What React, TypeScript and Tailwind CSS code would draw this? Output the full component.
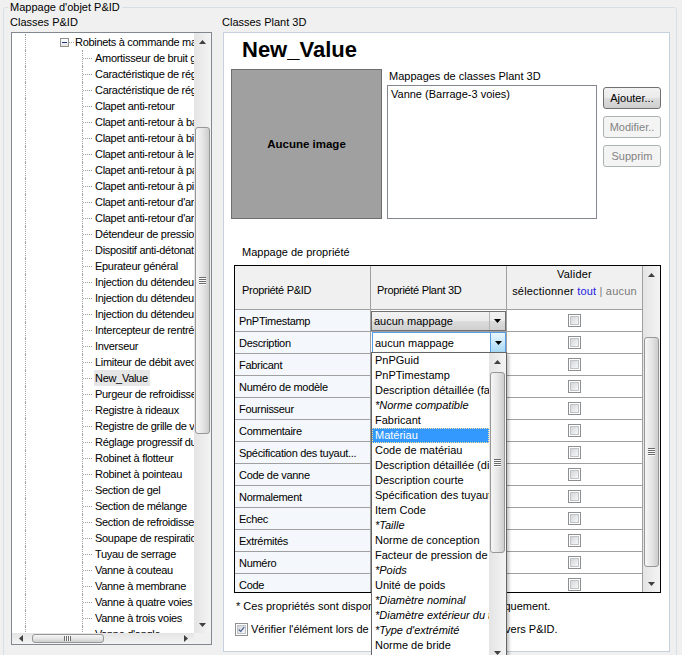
import React from "react";

const treeItems = [
  "Amortisseur de bruit générique",
  "Caractéristique de réglage linéaire",
  "Caractéristique de réglage égal pourcentage",
  "Clapet anti-retour",
  "Clapet anti-retour à battant",
  "Clapet anti-retour à bille",
  "Clapet anti-retour à levée",
  "Clapet anti-retour à papillon",
  "Clapet anti-retour à piston",
  "Clapet anti-retour d'angle",
  "Clapet anti-retour d'arrêt",
  "Détendeur de pression",
  "Dispositif anti-détonation",
  "Epurateur général",
  "Injection du détendeur",
  "Injection du détendeur à vapeur",
  "Injection du détendeur à eau",
  "Intercepteur de rentrée",
  "Inverseur",
  "Limiteur de débit avec clapet",
  "New_Value",
  "Purgeur de refroidissement",
  "Registre à rideaux",
  "Registre de grille de ventilation",
  "Réglage progressif du débit",
  "Robinet à flotteur",
  "Robinet à pointeau",
  "Section de gel",
  "Section de mélange",
  "Section de refroidissement",
  "Soupape de respiration",
  "Tuyau de serrage",
  "Vanne à couteau",
  "Vanne à membrane",
  "Vanne à quatre voies",
  "Vanne à trois voies",
  "Vanne d'angle",
];

const propRows = [
  "PnPTimestamp",
  "Description",
  "Fabricant",
  "Numéro de modèle",
  "Fournisseur",
  "Commentaire",
  "Spécification des tuyaut...",
  "Code de vanne",
  "Normalement",
  "Echec",
  "Extrémités",
  "Numéro",
  "Code",
];

const dropItems = [
  "PnPGuid",
  "PnPTimestamp",
  "Description détaillée (famille)",
  "*Norme compatible",
  "Fabricant",
  "Matériau",
  "Code de matériau",
  "Description détaillée (dimension)",
  "Description courte",
  "Spécification des tuyauteries",
  "Item Code",
  "*Taille",
  "Norme de conception",
  "Facteur de pression de conception",
  "*Poids",
  "Unité de poids",
  "*Diamètre nominal",
  "*Diamètre extérieur du tube",
  "*Type d'extrémité",
  "Norme de bride",
];

function Arrow({ dir, color = "#404040" }: { dir: "up" | "down" | "left" | "right"; color?: string }) {
  if (dir === "up" || dir === "down") {
    return (
      <svg width="7" height="4" viewBox="0 0 7 4">
        <polygon points={dir === "up" ? "3.5,0 7,4 0,4" : "0,0 7,0 3.5,4"} fill={color} />
      </svg>
    );
  }
  return (
    <svg width="4" height="7" viewBox="0 0 4 7">
      <polygon points={dir === "left" ? "0,3.5 4,0 4,7" : "0,0 4,3.5 0,7"} fill={color} />
    </svg>
  );
}

function GripH() {
  return (
    <svg width="7" height="8" viewBox="0 0 7 8">
      <rect x="0" y="0" width="7" height="1" fill="#6a6a6a" />
      <rect x="0" y="2" width="7" height="1" fill="#6a6a6a" />
      <rect x="0" y="4" width="7" height="1" fill="#6a6a6a" />
      <rect x="0" y="6" width="7" height="1" fill="#6a6a6a" />
      <rect x="0" y="1" width="7" height="1" fill="#fbfbfb" />
      <rect x="0" y="3" width="7" height="1" fill="#fbfbfb" />
      <rect x="0" y="5" width="7" height="1" fill="#fbfbfb" />
      <rect x="0" y="7" width="7" height="1" fill="#fbfbfb" />
    </svg>
  );
}

function GripV() {
  return (
    <svg width="8" height="5" viewBox="0 0 8 5">
      <rect x="0" y="0" width="1" height="5" fill="#6a6a6a" />
      <rect x="2" y="0" width="1" height="5" fill="#6a6a6a" />
      <rect x="4" y="0" width="1" height="5" fill="#6a6a6a" />
      <rect x="6" y="0" width="1" height="5" fill="#6a6a6a" />
      <rect x="1" y="0" width="1" height="5" fill="#fbfbfb" />
      <rect x="3" y="0" width="1" height="5" fill="#fbfbfb" />
      <rect x="5" y="0" width="1" height="5" fill="#fbfbfb" />
    </svg>
  );
}

function VScroll({ spacer, thumb }: { spacer: string; thumb: string }) {
  return (
    <div className="flex w-[17px] shrink-0 flex-col bg-gradient-to-r from-[#e4e4e4] to-[#f4f4f4]">
      <div className="flex h-[17px] shrink-0 items-center justify-center">
        <Arrow dir="up" />
      </div>
      <div className="flex min-h-0 flex-1 flex-col px-[1px]">
        <div className={`shrink-0 ${spacer}`} />
        <div
          className={`flex shrink-0 items-center justify-center rounded-[3px] border border-[#979797] bg-gradient-to-r from-[#f6f6f6] via-[#e6e6e6] to-[#cdcdcd] ${thumb}`}
        >
          <GripH />
        </div>
      </div>
      <div className="flex h-[17px] shrink-0 items-center justify-center">
        <Arrow dir="down" />
      </div>
    </div>
  );
}

function CheckBox({ checked = false }: { checked?: boolean }) {
  return (
    <div className="flex h-[13px] w-[13px] items-center justify-center border border-[#8e8f8f] bg-white">
      <div className="flex h-[9px] w-[9px] items-center justify-center border border-[#bfc2c6] bg-gradient-to-br from-[#d4d6d9] to-[#f7f7f7]">
        {checked && (
          <svg width="9" height="9" viewBox="0 0 9 9">
            <path d="M1 4.5 L3.5 7 L8 1.5" stroke="#4a5f97" strokeWidth="1.6" fill="none" />
          </svg>
        )}
      </div>
    </div>
  );
}

function WinButton({ label, disabled = false }: { label: string; disabled?: boolean }) {
  return (
    <button
      disabled={disabled}
      className={
        disabled
          ? "h-[22px] w-[58px] overflow-hidden whitespace-nowrap rounded-[3px] border border-[#adb2b5] bg-[#f4f4f4] text-[#838383]"
          : "h-[22px] w-[58px] overflow-hidden whitespace-nowrap rounded-[3px] border border-[#707070] bg-[linear-gradient(#f2f2f2,#ebebeb_50%,#dddddd_50%,#cfcfcf)] text-black"
      }
    >
      {label}
    </button>
  );
}

function TreeRow({ label, selected }: { label: string; selected?: boolean }) {
  return (
    <div className="flex h-[16px] shrink-0">
      <div className="w-[13px] shrink-0" />
      <div className="w-[57px] shrink-0 border-l border-dotted border-[#a0a0a0]" />
      <div className="flex w-[12px] shrink-0 items-center border-l border-dotted border-[#a0a0a0]">
        <div className="w-[9px] border-t border-dotted border-[#a0a0a0]" />
      </div>
      <span
        className={`whitespace-nowrap pl-[1px] pr-[2px] leading-[16px] ${selected ? "bg-[#e6e6e6]" : ""}`}
      >
        {label}
      </span>
    </div>
  );
}

export default function App() {
  return (
    <div className="relative h-[655px] w-[682px] overflow-hidden bg-[#f0f0f0] font-['Liberation_Sans',Arial,sans-serif] text-[11px] leading-[14px] text-black">
      <fieldset className="ml-[3px] h-[720px] w-[674px] rounded-[3px] border border-[#d5dfe5] p-0">
        <legend className="ml-[4px] px-[2px] leading-[14px]">Mappage d'objet P&amp;ID</legend>

        <div className="flex pl-[6px]">
          {/* Classes P&ID */}
          <div className="w-[202px] shrink-0">
            <div className="mt-[1px]">Classes P&amp;ID</div>
            <div className="ml-[1px] mt-[3px] flex h-[613px] w-[201px] flex-col border border-[#828790] bg-white">
              <div className="flex min-h-0 flex-1">
                <div className="min-w-0 flex-1 overflow-hidden pt-[1px] tracking-[-0.3px]">
                  <div className="flex h-[16px] items-center">
                    <div className="w-[13px] shrink-0" />
                    <div className="h-full w-[35px] shrink-0 border-l border-dotted border-[#a0a0a0]" />
                    <div className="flex h-[9px] w-[9px] shrink-0 items-center justify-center border border-[#919191] bg-gradient-to-b from-white to-[#e4e4e4]">
                      <div className="h-[1px] w-[5px] bg-[#1e3a7a]" />
                    </div>
                    <div className="w-[5px] shrink-0 border-t border-dotted border-[#a0a0a0]" />
                    <span className="whitespace-nowrap pl-[1px]">Robinets à commande manuelle</span>
                  </div>
                  {treeItems.map((t) => (
                    <TreeRow key={t} label={t} selected={t === "New_Value"} />
                  ))}
                </div>
                <VScroll spacer="h-[77px]" thumb="h-[307px]" />
              </div>
              <div className="flex h-[11px] shrink-0">
                <div className="flex min-w-0 flex-1 bg-gradient-to-b from-[#e4e4e4] to-[#f4f4f4]">
                  <div className="flex w-[17px] shrink-0 items-center justify-center">
                    <Arrow dir="left" />
                  </div>
                  <div className="flex flex-1 py-[1px]">
                    <div className="w-[3px] shrink-0" />
                    <div className="flex w-[72px] shrink-0 items-center justify-center rounded-[3px] border border-[#979797] bg-gradient-to-b from-[#f6f6f6] via-[#e6e6e6] to-[#cdcdcd]">
                      <GripV />
                    </div>
                  </div>
                  <div className="flex w-[17px] shrink-0 items-center justify-center">
                    <Arrow dir="right" />
                  </div>
                </div>
                <div className="w-[17px] shrink-0 bg-[#f0f0f0]" />
              </div>
            </div>
          </div>

          {/* Classes Plant 3D */}
          <div className="ml-[10px] w-[448px] shrink-0">
            <div className="mt-[1px]">Classes Plant 3D</div>
            <div className="ml-[1px] mt-[3px] h-[620px] w-[447px] border border-[#c5d1dd] bg-white">
              <h1 className="ml-[18px] mt-[6px] text-[22px] font-bold leading-[22px]">New_Value</h1>

              <div className="ml-[7px] mt-[8px] flex">
                <div className="flex h-[150px] w-[151px] shrink-0 items-center justify-center border border-[#6e6e6e] bg-[#a0a0a0] text-[11.5px] font-bold">
                  Aucune image
                </div>
                <div className="ml-[5px]">
                  <div className="ml-[2px]">Mappages de classes Plant 3D</div>
                  <div className="mt-[2px] h-[134px] w-[210px] border border-[#828790] bg-white pl-[3px] pt-[1px]">
                    Vanne (Barrage-3 voies)
                  </div>
                </div>
                <div className="ml-[6px] mt-[18px] flex flex-col gap-[7px]">
                  <WinButton label="Ajouter..." />
                  <WinButton label="Modifier.." disabled />
                  <WinButton label="Supprim" disabled />
                </div>
              </div>

              <div className="ml-[18px] mt-[26px]">Mappage de propriété</div>

              <div className="ml-[10px] mt-[6px] flex h-[328px] w-[427px] border border-black">
                <div className="w-[408px] shrink-0 overflow-hidden tracking-[-0.3px]">
                  <div className="flex h-[44px] bg-[#f0f0f0]">
                    <div className="w-[136px] border-b border-r border-[#a0a0a0] pl-[7px] pt-[17px]">
                      Propriété P&amp;ID
                    </div>
                    <div className="w-[136px] border-b border-r border-[#a0a0a0] pl-[6px] pt-[17px]">
                      Propriété Plant 3D
                    </div>
                    <div className="w-[136px] whitespace-nowrap border-b border-r border-[#a0a0a0] text-center leading-[17px] tracking-[0.2px]">
                      <div>Valider</div>
                      <div>
                        sélectionner <span className="text-[#2020e0]">tout</span>{" "}
                        <span className="text-[#7a7a7a]">| aucun</span>
                      </div>
                    </div>
                  </div>
                  {propRows.map((r, i) => (
                    <div key={r} className="flex h-[22px]">
                      <div className="flex w-[136px] items-center overflow-hidden whitespace-nowrap border-b border-r border-[#a0a0a0] bg-[#f4f7fb] pl-[4px]">
                        {r}
                      </div>
                      <div className="w-[136px] border-b border-r border-[#a0a0a0] tracking-normal">
                        {i === 0 && (
                          <div className="mt-[1px] flex h-[20px] w-[135px] items-center border border-[#707070] bg-[linear-gradient(#f2f2f2,#ebebeb_50%,#dddddd_50%,#cfcfcf)]">
                            <span className="flex-1 pl-[2px]">aucun mappage</span>
                            <div className="flex h-full w-[16px] items-center justify-center border-l border-[#b5b5b5]">
                              <Arrow dir="down" color="#000" />
                            </div>
                          </div>
                        )}
                        {i === 1 && (
                          <div className="ml-[1px] flex h-[21px] w-[134px] items-center border border-[#569de5] bg-white">
                            <span className="flex-1 pl-[2px]">aucun mappage</span>
                            <div className="flex h-full w-[15px] items-center justify-center border-l border-[#569de5] bg-gradient-to-b from-[#eaf6fd] via-[#c9e8fa] to-[#a7d9f5]">
                              <Arrow dir="down" color="#000" />
                            </div>
                          </div>
                        )}
                      </div>
                      <div className="flex w-[136px] items-center justify-center border-b border-r border-[#a0a0a0] bg-white">
                        <CheckBox />
                      </div>
                    </div>
                  ))}
                </div>
                <VScroll spacer="h-[54px]" thumb="h-[230px]" />
              </div>

              <div className="ml-[12px] mt-[6px] whitespace-nowrap">
                * Ces propriétés sont disponibles pour les éléments uniquement.
              </div>
              <div className="ml-[11px] mt-[9px] flex items-center whitespace-nowrap">
                <CheckBox checked />
                <span className="ml-[3px]">Vérifier l'élément lors de la publication des données vers P&amp;ID.</span>
              </div>
            </div>
          </div>
        </div>
      </fieldset>

      {/* dropdown list of the Description combo */}
      <div className="absolute left-[371px] top-[352px] flex h-[310px] w-[136px] border border-[#646464] bg-white shadow-[2px_2px_3px_rgba(0,0,0,0.25)]">
        <div className="w-[117px] shrink-0 overflow-hidden">
          {dropItems.map((d) =>
            d === "Matériau" ? (
              <div
                key={d}
                className="h-[15px] whitespace-nowrap border border-dotted border-[#ffe0a0] bg-[#3399ff] pl-[2px] leading-[13px] text-white"
              >
                {d}
              </div>
            ) : (
              <div
                key={d}
                className={`h-[15px] whitespace-nowrap pl-[3px] leading-[15px] ${d.startsWith("*") ? "italic" : ""}`}
              >
                {d}
              </div>
            )
          )}
        </div>
        <VScroll spacer="h-[2px]" thumb="h-[181px]" />
      </div>
    </div>
  );
}
